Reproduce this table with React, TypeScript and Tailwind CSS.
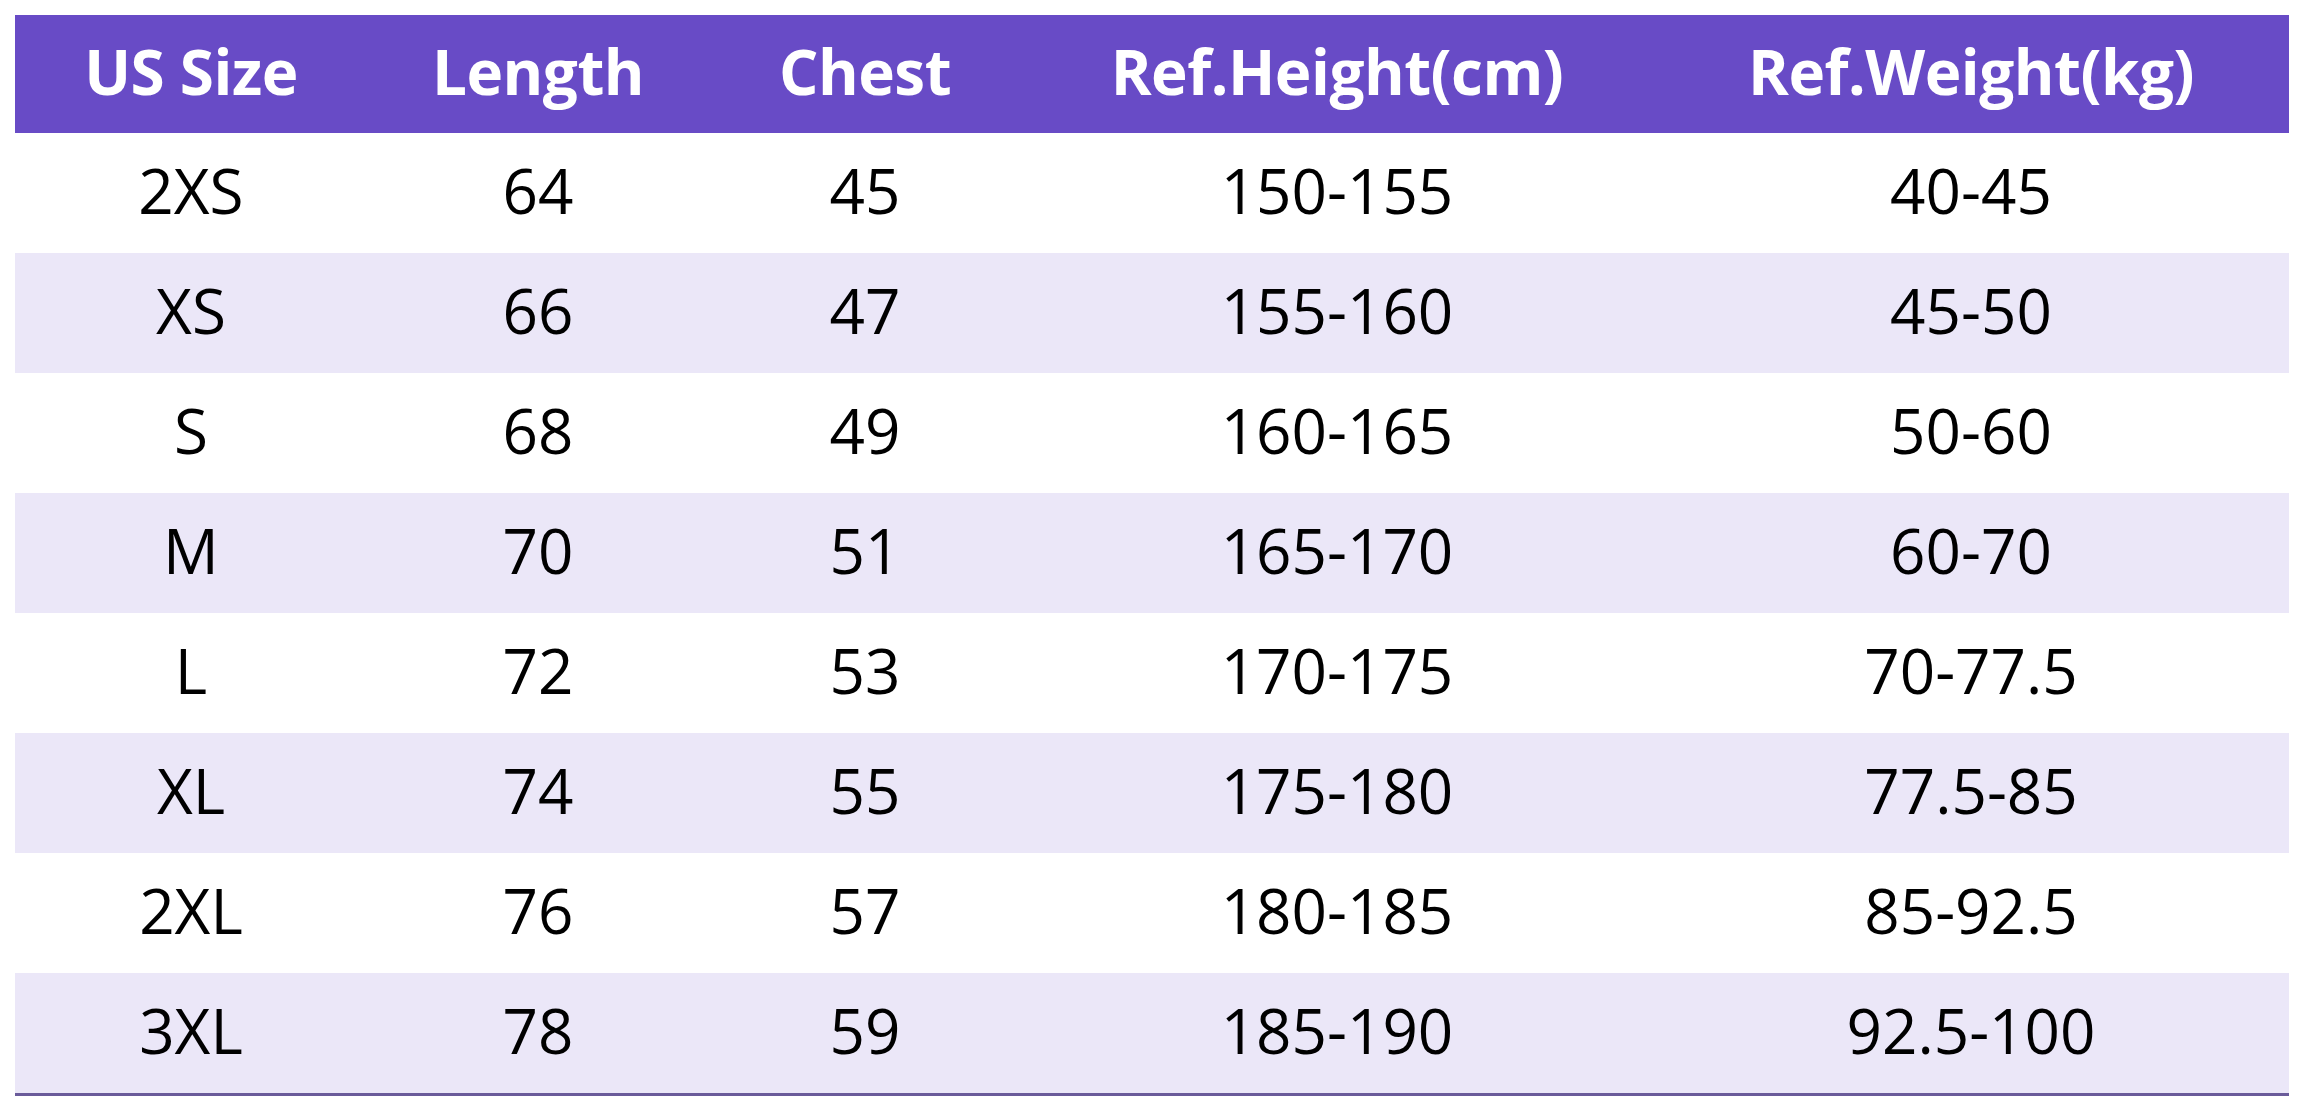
import React from "react";

const headers = ["US Size", "Length", "Chest", "Ref.Height(cm)", "Ref.Weight(kg)"];
const rows: string[][] = [
  ["2XS", "64", "45", "150-155", "40-45"],
  ["XS", "66", "47", "155-160", "45-50"],
  ["S", "68", "49", "160-165", "50-60"],
  ["M", "70", "51", "165-170", "60-70"],
  ["L", "72", "53", "170-175", "70-77.5"],
  ["XL", "74", "55", "175-180", "77.5-85"],
  ["2XL", "76", "57", "180-185", "85-92.5"],
  ["3XL", "78", "59", "185-190", "92.5-100"],
];

const cols = "grid grid-cols-[352px_342px_312px_632px_636px]";

export default function App() {
  return (
    <div className="w-[2304px] h-[1110px] bg-white pl-[15px] pt-[15px] font-['Open_Sans','Noto_Sans',sans-serif]">
      <div className="w-[2274px] border-b-[3px] border-[#6a5b9a]">
        <div className={`${cols} h-[118px] bg-[#684bc6] text-white font-bold text-[62px] tracking-[-0.5px]`}>
          {headers.map((h) => (
            <div key={h} className="flex items-center justify-center pb-[5px]">
              {h}
            </div>
          ))}
        </div>
        {rows.map((r, i) => (
          <div
            key={r[0]}
            className={`${cols} h-[120px] text-black text-[62px] ${i % 2 === 1 ? "bg-[#ebe7f8]" : "bg-white"}`}
          >
            {r.map((c, j) => (
              <div key={j} className="flex items-center justify-center pb-[5px]">
                {c}
              </div>
            ))}
          </div>
        ))}
      </div>
    </div>
  );
}
